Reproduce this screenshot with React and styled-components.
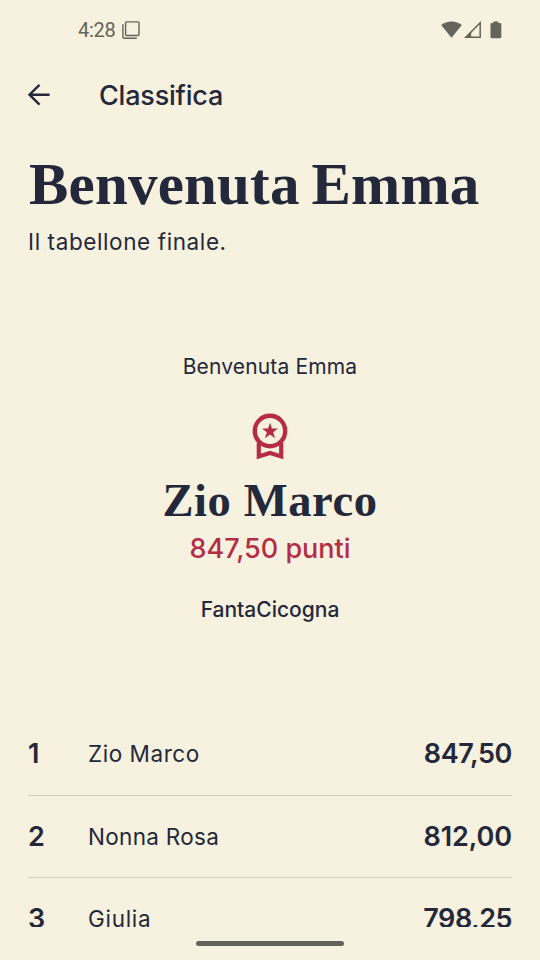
import React from 'react'
import styled, { createGlobalStyle } from 'styled-components';


const ranking = [
  { place: 1, name: "Zio Marco", points: "847,50", nameSpacing: "0.55px", pointsSpacing: "-0.4px" },
  { place: 2, name: "Nonna Rosa", points: "812,00", nameSpacing: "0.3px", pointsSpacing: "-0.1px" },
  { place: 3, name: "Giulia", points: "798,25", nameSpacing: "0.7px", pointsSpacing: "-0.5px" },
];

const StatusBar = () => {
  return (
    <Status>
      <Clock>4:28</Clock>
      <svg width="18" height="18" viewBox="0 0 18 18" fill="none" stroke="#65645a" strokeWidth="1.4">
        <rect x="3.6" y="0.9" width="13.4" height="13.6" rx="1" />
        <path d="M0.9 3.2V16a1.2 1.2 0 0 0 1.2 1.2H14.8" />
      </svg>
      <Signals>
        <svg width="21" height="17" viewBox="0 0 21 17" fill="#65645a">
          <path d="M10.5 16.8 0.2 4.1C3 1.8 6.6 0.5 10.5 0.5s7.5 1.3 10.3 3.6z" />
        </svg>
        <svg width="17" height="17" viewBox="0 0 17 17">
          <path d="M1.8 16.2 16.2 1.8V16.2z" fill="none" stroke="#65645a" strokeWidth="1.5" />
          <path d="M0.5 16.9 7.2 10.2V16.9z" fill="#65645a" />
        </svg>
        <svg width="12" height="18" viewBox="0 0 12 18" fill="#65645a">
          <path d="M3.3 0.5h5v1.5H10a1.3 1.3 0 0 1 1.3 1.3V16A1.3 1.3 0 0 1 10 17.3H1.8A1.3 1.3 0 0 1 .5 16V3.3A1.3 1.3 0 0 1 1.8 2h1.5z" />
        </svg>
      </Signals>
    </Status>
  )
};

const Medal = () => {
  return (
    <svg width="36" height="48" viewBox="0 0 36 48" fill="none">
      <circle cx="18" cy="18" r="15.2" stroke="#b52d45" strokeWidth="4.4" />
      <path d="M6.8 30V43.4L18 40 29.2 43.4V30" stroke="#b52d45" strokeWidth="4.2" />
      <path d="M18 9.8 20 15.5H26L21.2 19.2 23 25.2 18 21.6 13 25.2 14.8 19.2 10 15.5H16z" fill="#b52d45" />
    </svg>
  )
};

const App = () => {
  return (
    <>
      <GlobalStyle />
      <Screen>
        <Content>
          <StatusBar />
          <TopBar>
            <svg width="24" height="24" viewBox="0 0 24 24" fill="none" stroke="#23283a" strokeWidth="2.4">
              <path d="M23.6 11.7H3.8M13.500 1.800 3.500 11.700 13.500 21.600" />
            </svg>
            <PageName>Classifica</PageName>
          </TopBar>

          <Title>Benvenuta Emma</Title>
          <Subtitle>Il tabellone finale.</Subtitle>

          <Winner>
            <League>Benvenuta Emma</League>
            <Medal />
            <WinnerName>Zio Marco</WinnerName>
            <WinnerPoints>847,50 punti</WinnerPoints>
            <Brand>FantaCicogna</Brand>
          </Winner>

          <Ranking>
            {ranking.map((item) => (
              <Row key={item.place}>
                <Place>{item.place}</Place>
                <Name $spacing={item.nameSpacing}>{item.name}</Name>
                <Points $spacing={item.pointsSpacing}>{item.points}</Points>
              </Row>
            ))}
          </Ranking>
        </Content>
        <HomeBar />
      </Screen>
    </>
  )
};

const GlobalStyle = createGlobalStyle`
  * {
    margin: 0;
    padding: 0;
    box-sizing: border-box;
  }
  body {
    background: #f7f1df;
    color: #23283a;
    font-family: Inter, sans-serif;
    overflow: hidden;
  }
  svg {
    display: block;
    flex-shrink: 0;
  }
`

const Screen = styled.div`
  width: 540px;
  height: 960px;
  overflow: hidden;
  background: #f7f1df;
`

const Content = styled.main`
  height: 927px;
  padding: 0 28px;
  overflow: hidden;
`

const Status = styled.div`
  display: flex;
  align-items: center;
  height: 59px;
  padding: 0 10px 0 50px;
`

const Clock = styled.span`
  width: 44px;
  font-family: Roboto, sans-serif;
  font-size: 20px;
  letter-spacing: -0.3px;
  color: #65645a;
`

const Signals = styled.div`
  display: flex;
  align-items: center;
  margin-left: auto;
  gap: 2px;
  svg:last-child {
    margin-left: 7px;
  }
`

const TopBar = styled.header`
  display: flex;
  align-items: center;
  gap: 49px;
  height: 72px;
  margin-left: -2px;
`

const PageName = styled.h2`
  font-size: 27px;
  font-weight: 500;
  letter-spacing: -0.2px;
`

const Title = styled.h1`
  margin-top: 17px;
  padding-left: 1px;
  font-family: "Liberation Serif", serif;
  font-size: 59px;
  font-weight: 700;
  line-height: 72px;
  letter-spacing: 0.2px;
  word-spacing: -3px;
  white-space: nowrap;
`

const Subtitle = styled.p`
  margin-top: 7px;
  font-size: 22.5px;
  line-height: 30px;
  letter-spacing: 0.6px;
`

const Winner = styled.section`
  display: flex;
  flex-direction: column;
  align-items: center;
  margin-top: 95px;
`

const League = styled.p`
  margin-bottom: 31px;
  font-size: 21px;
  line-height: 30px;
  letter-spacing: 0.15px;
`

const WinnerName = styled.h2`
  margin-top: 10px;
  font-family: "Liberation Serif", serif;
  font-size: 46.5px;
  font-weight: 700;
  line-height: 60px;
  letter-spacing: 0.6px;
`

const WinnerPoints = styled.p`
  margin-top: 1px;
  font-size: 27px;
  font-weight: 500;
  line-height: 34px;
  color: #b52d45;
`

const Brand = styled.p`
  margin-top: 29px;
  font-size: 21px;
  font-weight: 500;
  line-height: 30px;
`

const Ranking = styled.ul`
  margin-top: 88.3px;
  list-style: none;
`

const Row = styled.li`
  display: flex;
  align-items: center;
  height: 82.4px;
  border-bottom: 1px solid #d3cebf;
`

const Place = styled.span`
  width: 60px;
  font-size: 27px;
  font-weight: 580;
`

const Name = styled.span`
  flex: 1;
  font-size: 22.5px;
  letter-spacing: ${({ $spacing }) => $spacing};
`

const Points = styled.span`
  font-size: 27px;
  font-weight: 580;
  letter-spacing: ${({ $spacing }) => $spacing};
`

const HomeBar = styled.div`
  width: 148px;
  height: 5px;
  margin: 14px auto 0;
  border-radius: 3px;
  background: #65645a;
`

export default App
